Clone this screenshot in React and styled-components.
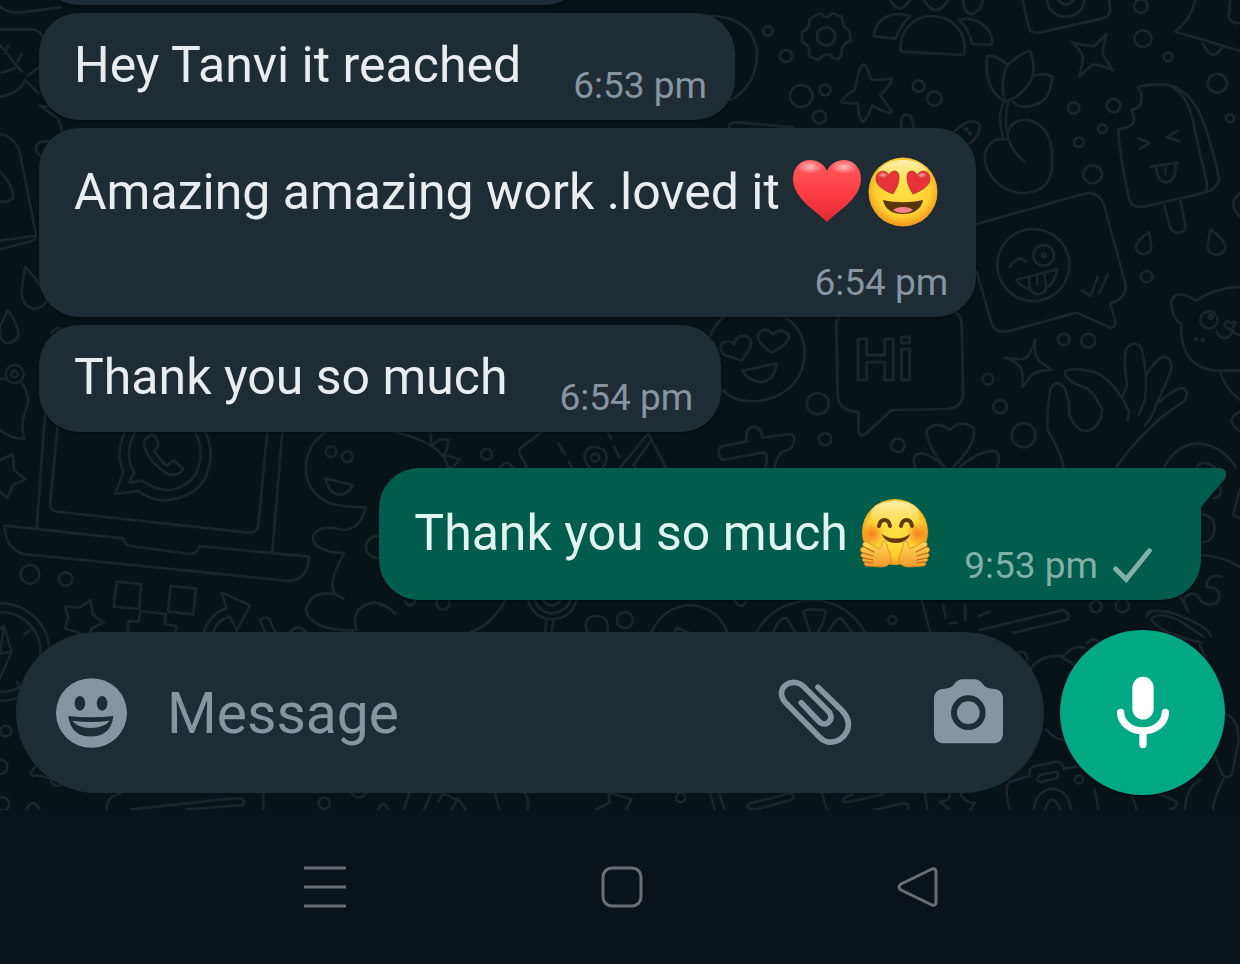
import React from 'react'
import styled, { createGlobalStyle } from 'styled-components'

const GlobalStyle = createGlobalStyle`
  * {
    box-sizing: border-box;
  }
  body {
    margin: 0;
    background: #0b131a;
    font-family: Roboto, 'Noto Sans', sans-serif;
  }
`

const Screen = styled.div`
  display: flex;
  flex-direction: column;
  height: 100vh;
`
const Chat = styled.main`
  position: relative;
  display: flex;
  flex: 1;
  flex-direction: column;
  min-height: 0;
  overflow: hidden;
  background: #081318;
`
const Wallpaper = styled.svg`
  position: absolute;
  inset: 0;
  width: 100%;
  height: 100%;
  fill: none;
  stroke: #1a2429;
  stroke-width: 8;
  stroke-linecap: round;
  stroke-linejoin: round;
`
const WallpaperText = styled.text`
  font: 700 60px 'Liberation Sans', sans-serif;
  stroke-width: 3px;
`
const Messages = styled.section`
  position: relative;
  display: flex;
  flex: 1;
  flex-direction: column;
  justify-content: flex-end;
  gap: 8px;
  min-height: 0;
  padding: 0 39px 30px;
`
const Bubble = styled.article`
  position: relative;
  display: flex;
  flex-shrink: 0;
  flex-direction: ${p => (p.$stacked ? 'column' : 'row')};
  align-items: flex-end;
  align-self: ${p => (p.$sent ? 'flex-end' : 'flex-start')};
  column-gap: ${p => (p.$sent ? 28 : 52)}px;
  row-gap: 34px;
  margin-top: ${p => (p.$sent ? 28 : 0)}px;
  padding: ${p => (p.$sent ? 30 : p.$stacked ? 29 : 23)}px ${p => (p.$sent ? 49 : 28)}px 12px 35px;
  border-radius: ${p => (p.$sent ? '40px 0 40px 40px' : '40px')};
  background: ${p => (p.$sent ? '#005d4b' : '#1f2c34')};
  color: ${p => (p.$sent ? '#e2f3f0' : '#e9edef')};
  box-shadow: 0 2px 2px rgba(0, 0, 0, 0.3);
`
const EarlierBubble = styled(Bubble)`
  width: 47%;
  height: 107px;
`
const Text = styled.p`
  margin: 0 ${p => (p.$inset ? 4 : 0)}px ${p => p.$drop || 0}px 0;
  font-size: 50px;
  line-height: 58px;
  white-space: nowrap;
`
const Meta = styled.footer`
  display: flex;
  align-items: center;
  gap: 15px;
  color: ${p => (p.$sent ? '#80b0a6' : '#8696a0')};
  font-size: 37px;
  line-height: 44px;
  white-space: nowrap;
`
const Tail = styled.svg`
  position: absolute;
  top: 0;
  left: 100%;
  width: 25px;
  height: 39px;
  fill: #005d4b;
`
const EmojiSvg = styled.svg`
  width: 70px;
  height: 70px;
  margin-right: 6px;
  vertical-align: -18px;
`
const Icon = styled.svg`
  display: block;
  width: ${p => p.$w}px;
  height: ${p => p.$h}px;
`
const Composer = styled.form`
  position: relative;
  display: flex;
  align-items: center;
  gap: 16px;
  padding: 0 15px 15px 16px;
`
const Field = styled.div`
  display: flex;
  flex: 1;
  align-items: center;
  min-width: 0;
  height: 161px;
  padding: 0 41px 0 40px;
  border-radius: 81px;
  background: #1f2c34;
  color: #8696a0;
`
const IconButton = styled.button`
  flex-shrink: 0;
  margin: 0 0 0 ${p => p.$gap || 0}px;
  padding: 0;
  border: 0;
  background: none;
  color: inherit;
`
const MessageInput = styled.input`
  flex: 1;
  min-width: 0;
  margin-left: 40px;
  padding: 2px 0 0;
  border: 0;
  outline: 0;
  background: none;
  color: #e9edef;
  font: 400 57px Roboto, sans-serif;
  &::placeholder {
    color: #8696a0;
    opacity: 1;
  }
`
const MicButton = styled.button`
  display: flex;
  flex-shrink: 0;
  align-items: center;
  justify-content: center;
  width: 165px;
  height: 165px;
  padding: 0;
  border: 0;
  border-radius: 50%;
  background: #00a884;
  color: #fff;
  box-shadow: 0 2px 4px rgba(0, 0, 0, 0.4);
`
const SystemNav = styled.nav`
  display: flex;
  align-items: center;
  justify-content: space-around;
  height: 154px;
  padding: 0 14% 0 14.3%;
  color: #6a6f73;
`

const HEART = 'M35 65C27 56 1 42 1 22C1 10 9 3 18 3C26 3 32 7 35 14C38 7 44 3 52 3C61 3 69 10 69 22C69 42 43 56 35 65Z'

const Heart = () => (
  <EmojiSvg viewBox="0 0 70 70" role="img" aria-label="red heart">
    <defs>
      <linearGradient id="heart" x1="0" y1="0" x2="0" y2="1">
        <stop offset="0" stopColor="#ff5a5f" />
        <stop offset="0.55" stopColor="#fb3c42" />
        <stop offset="1" stopColor="#e02a33" />
      </linearGradient>
      <radialGradient id="shine">
        <stop offset="0" stopColor="#fff" stopOpacity="0.6" />
        <stop offset="1" stopColor="#fff" stopOpacity="0" />
      </radialGradient>
    </defs>
    <path d={HEART} fill="url(#heart)" />
    <ellipse cx="18" cy="10" rx="13" ry="7" fill="url(#shine)" />
    <ellipse cx="52" cy="10" rx="13" ry="7" fill="url(#shine)" />
  </EmojiSvg>
)

const HeartEyes = () => (
  <EmojiSvg viewBox="0 0 70 70" role="img" aria-label="smiling face with heart eyes">
    <defs>
      <radialGradient id="face" cx="0.5" cy="0.45" r="0.56">
        <stop offset="0" stopColor="#ffe248" />
        <stop offset="0.72" stopColor="#fdcf2f" />
        <stop offset="1" stopColor="#ee931b" />
      </radialGradient>
      <linearGradient id="faceShine" x1="0" y1="0" x2="0" y2="1">
        <stop offset="0" stopColor="#fff6c4" stopOpacity="0.85" />
        <stop offset="1" stopColor="#fff3a0" stopOpacity="0" />
      </linearGradient>
    </defs>
    <circle cx="35" cy="35" r="34.5" fill="url(#face)" />
    <ellipse cx="35" cy="17" rx="25" ry="14" fill="url(#faceShine)" />
    <path d="M25 37C20 35 8 30 8 22C8 13 18 12 21 18C24 12 31 13 31 20C31 27 28 32 25 37Z" fill="#e8333c" stroke="#a8321f" strokeWidth="0.8" />
    <path d="M45 37C50 35 62 30 62 22C62 13 52 12 49 18C46 12 39 13 39 20C39 27 42 32 45 37Z" fill="#e8333c" stroke="#a8321f" strokeWidth="0.8" />
    <ellipse cx="15" cy="18" rx="5" ry="3" fill="url(#shine)" />
    <ellipse cx="54" cy="18" rx="5" ry="3" fill="url(#shine)" />
    <path d="M15 43C28 46 42 46 55 43C53 53 45 57 35 57C25 57 17 53 15 43Z" fill="#5b3506" />
    <path d="M25 53C29 49 41 49 45 53C40 57 30 57 25 53Z" fill="#f7828c" />
  </EmojiSvg>
)

const Hugging = () => (
  <EmojiSvg viewBox="0 0 70 70" role="img" aria-label="hugging face">
    <defs>
      <radialGradient id="blush">
        <stop offset="0" stopColor="#f76a1c" stopOpacity="0.8" />
        <stop offset="1" stopColor="#f76a1c" stopOpacity="0" />
      </radialGradient>
      <linearGradient id="hand" x1="0" y1="0" x2="0" y2="1">
        <stop offset="0" stopColor="#ffdc58" />
        <stop offset="1" stopColor="#f3992c" />
      </linearGradient>
      <g id="hug-hand">
        <path
          d="M22 44C24 42 27 44 27 48C28 53 31 56 31 61C31 66 27 69 21 69L7 68C4 68 3 65 6 64C2 64 1 61 4 60C0 59 0 56 3 55C-1 53 0 49 4 49C1 46 4 43 7 44L18 50C21 51 22 49 22 44Z"
          fill="url(#hand)"
          stroke="#e2801c"
          strokeWidth="0.8"
        />
        <path d="M4 49L14 54M3 55L13 58M4 60L13 62M6 64L13 65" fill="none" stroke="#bd6410" strokeWidth="1.2" strokeLinecap="round" />
      </g>
    </defs>
    <circle cx="35" cy="34" r="33" fill="url(#face)" />
    <ellipse cx="35" cy="16" rx="24" ry="13" fill="url(#faceShine)" />
    <circle cx="12" cy="36" r="12" fill="url(#blush)" />
    <circle cx="58" cy="36" r="12" fill="url(#blush)" />
    <path d="M19 28C20 20 29 20 30 28M41 28C42 20 51 20 52 28" fill="none" stroke="#5f3a0a" strokeWidth="4" strokeLinecap="round" />
    <path d="M22 36C30 42 42 42 50 36C47 48 25 48 22 36Z" fill="#653807" />
    <use href="#hug-hand" />
    <use href="#hug-hand" transform="translate(70 0) scale(-1 1)" />
  </EmojiSvg>
)

const Rings = ({ items }) => items.map(([cx, cy, r]) => <circle key={`${cx}-${cy}-${r}`} cx={cx} cy={cy} r={r} />)

const Doodles = () => (
  <Wallpaper viewBox="0 0 1240 810" preserveAspectRatio="xMidYMin slice" aria-hidden="true">
    {/* gear, people, star, plant, ice lolly */}
    <g transform="translate(700 0) scale(.3444 .3333)">
      <path d="M0 48C120 40 165 100 165 165C165 235 130 275 90 300" />
      <path d="M341 42L350 40Q366 62 383 40L412 50Q412 80 434 92L437 124Q410 128 410 166L402 178Q385 176 380 165Q366 160 355 168L345 180L316 168Q322 136 296 126V96Q322 84 318 58Z" />
      <path d="M582 150C578 90 625 48 672 48C735 48 775 100 768 158Q768 166 758 165L590 155Q582 155 582 150ZM505 108C508 60 550 30 610 48Q580 80 568 116L512 110ZM752 60C800 45 850 85 848 128Q848 134 840 134L790 132Q780 85 752 60Z" />
      <path d="M552 0Q578 50 610 0M650 0Q685 60 720 0M764 0Q765 40 790 42Q815 35 822 0" />
      <path d="M936 0L956 85Q960 100 985 98L1170 55Q1195 45 1190 20L1188 0M1008 0a54 50 0 0 0 108 0M1040 0q22 28 44 0" />
      <path d="M1438 0Q1425 60 1380 95L1568 152M1460 130Q1485 190 1515 145M1540 0L1535 50Q1545 75 1568 68" />
      <path d="M475 192Q482 195 498 240L555 236Q565 242 523 286Q560 335 555 338Q545 342 500 317Q480 366 473 366Q462 360 458 310L412 308Q405 300 450 268Q462 195 475 192Z" />
      <path d="M1180 102Q1168 150 1170 165L1198 210Q1160 193 1140 194Q1125 205 1102 230Q1112 185 1112 170Q1105 150 1080 127Q1130 140 1145 138Z" />
      <path d="M835 168Q860 165 893 195Q930 160 958 152Q975 190 965 235Q935 290 885 305Q830 270 832 190ZM893 195Q870 240 885 305M965 230Q1000 215 1023 230Q1020 320 940 320Q920 318 908 305" />
      <path d="M882 305Q862 350 880 412M895 302Q880 380 900 430Q915 465 942 484M895 400Q900 360 950 360Q1010 370 1022 450V510Q1010 580 930 580Q850 565 828 490Q820 440 860 418L890 418" />
      <path d="M1270 262Q1300 250 1360 254C1420 280 1430 350 1445 430L1472 550Q1475 572 1460 580L1290 620Q1255 625 1247 600Q1220 480 1214 388Q1250 385 1260 365Q1262 345 1252 330Q1285 325 1282 290Q1280 270 1270 262ZM1360 256C1440 270 1470 380 1490 460Q1505 520 1507 540Q1500 570 1460 580" />
      <path d="M1272 415L1306 429L1278 446M1384 393L1356 412L1392 424M1308 500Q1350 495 1386 488M1325 500Q1325 545 1355 548Q1385 540 1380 492M1352 505v18M1348 615L1366 685Q1385 710 1408 690Q1412 680 1395 605" />
      <path d="M85 384Q85 365 110 367L270 382M585 384Q580 345 600 343Q618 345 620 384M738 395Q790 345 812 375Q815 400 785 430" />
      <Rings
        items={[
          [197, 93, 14], [250, 168, 18], [294, 288, 33], [363, 270, 16], [347, 351, 19], [635, 258, 17],
          [680, 296, 21], [1280, 18, 20], [1286, 116, 25], [1359, 171, 13], [1502, 250, 28], [1085, 324, 17],
          [1201, 317, 20], [1168, 386, 13], [1100, 427, 14], [1140, 523, 27], [1539, 355, 12], [366, 109, 27],
          [773, 388, 3], [784, 400, 3],
        ]}
      />
    </g>
    {/* winking bubble, cat, ok hand */}
    <g transform="translate(960 170) scale(.3333)">
      <path d="M50 162L370 72Q415 60 432 105L495 335Q505 385 450 400L466 455Q468 475 450 473L350 428L145 484Q105 490 95 460L50 305" />
      <path d="M150 290Q175 252 198 275M168 330L292 298Q280 350 258 352M208 358Q185 352 168 330M208 322v25q5 28 30 25q25-5 20-30l-5-30M232 318v25M366 361L392 378L413 320M418 370L443 314" />
      <path d="M567 186Q525 215 528 235Q535 255 555 252Q578 248 573 220ZM752 178Q795 210 797 232Q790 255 768 254Q742 250 743 225Z" />
      <path d="M840 350Q760 355 708 392Q640 350 633 400Q640 450 663 462Q660 600 780 602H840M770 485Q780 505 795 505Q815 500 818 480Q825 495 840 495M812 480Q785 465 800 455Q808 450 812 460Q825 450 826 462ZM780 602Q790 650 840 690M840 725Q790 750 840 785M840 70Q800 100 840 140" />
      <path d="M226 508Q220 560 240 575L276 600Q230 600 212 618L187 652Q190 605 183 595Q165 570 134 563Q185 572 200 562Q215 545 226 508Z" />
      <path d="M310 890Q305 850 262 780Q260 720 272 655Q290 625 315 655Q328 690 328 735Q350 785 380 783Q420 775 427 720Q400 665 380 655Q310 630 315 605Q335 590 400 605Q460 625 508 725L503 750M487 680L502 645Q490 590 497 540Q520 505 545 535Q565 620 555 690L537 733M560 615Q590 560 615 560Q640 570 633 600Q615 650 590 700Q580 740 555 765M600 695Q650 650 670 655Q690 665 672 695Q600 740 570 775Q520 820 470 890" />
      <path d="M612 892Q650 820 720 820Q790 830 828 892M710 892Q725 865 765 892" />
      <Rings
        items={[
          [220, 285, 108], [251, 256, 31], [251, 256, 6], [560, 320, 17], [311, 508, 17], [385, 512, 21],
          [84, 628, 16], [120, 710, 20], [191, 796, 36], [747, 450, 26], [752, 440, 6], [708, 507, 3], [728, 510, 3],
        ]}
      />
    </g>
    {/* heart eyes, speech bubble, clover */}
    <g transform="translate(700 300) scale(.3444 .3333)">
      <path d="M30 108Q40 75 70 50M245 50Q304 90 304 160C304 300 130 340 65 270M122 181L70 165Q50 140 68 127Q90 120 98 133Q105 105 132 107Q155 115 145 145ZM208 157Q165 130 168 105Q185 75 212 103Q235 80 258 105Q262 130 208 157ZM124 212L223 190Q215 245 175 246Q140 242 124 212" />
      <path d="M395 75L400 290Q405 335 460 335V395Q465 410 480 403L556 330L720 327Q765 320 764 280L760 80Q760 50 740 35M395 75Q395 60 405 50" />
      <path d="M60 440L135 425Q130 382 158 380Q180 385 180 413L262 402Q285 408 265 445L235 458Q220 480 217 502M60 440Q45 460 65 480L185 457Q200 460 190 502" />
      <path d="M710 502Q655 430 658 390Q690 360 725 390Q760 355 795 385Q805 430 735 502M625 502Q610 460 645 460Q680 470 710 502M755 500Q820 445 860 455Q875 475 862 502" />
      <Rings items={[[342, 311, 32], [363, 418, 18], [575, 436, 20]]} />
    </g>
    <WallpaperText x="854" y="380">Hi</WallpaperText>
    {/* leaf, bag, drops */}
    <g transform="scale(.3333)">
      <path d="M0 20Q20 38 60 38L180 22M0 88H95Q120 90 128 110M0 135L65 215M15 160L25 135M52 185L65 162M5 218L45 205M0 290Q60 280 75 240L115 280M85 225L120 200M120 318L175 355L187 395M120 318L150 320M150 425Q110 420 107 445Q110 465 125 468" />
      <path d="M0 402Q45 410 60 460L107 700Q110 720 90 725L0 748M0 722L100 708M0 515Q45 560 38 595Q25 608 0 605M75 800Q140 870 140 905Q120 930 95 925Q60 910 66 865ZM23 930Q58 980 55 1010Q40 1030 20 1030Q-5 1020 0 980Z" />
      <path d="M0 1135L20 1137M65 1148Q95 1190 78 1230Q60 1270 72 1317Q30 1315 0 1290M155 1000Q160 985 180 985" />
      <Rings items={[[44, 1122, 27], [44, 1122, 10]]} />
    </g>
    {/* laptop, dinosaur, compass */}
    <g transform="translate(0 420) scale(.3333)">
      <path d="M0 120L38 103L42 150L75 178L40 195L22 233L0 215M137 -40L110 322M175 0L150 255Q152 275 180 276L745 338Q772 338 775 315L802 36M847 36L817 395M14 317L370 355Q372 375 392 378L570 402Q595 402 597 378L927 410Q925 480 865 483L70 402Q15 385 14 317Z" />
      <path d="M375 36Q345 100 370 155L345 222L415 213Q450 241 495 241Q630 230 632 100Q630 60 615 36M405 36Q370 100 402 158L388 188L425 182Q470 212 510 210Q600 195 602 100Q600 60 585 36M455 45Q425 55 435 85Q450 130 505 163Q540 170 550 145L520 122L500 137Q475 115 463 92L475 78Q472 45 455 45Z" />
      <path d="M980 36C900 80 890 210 990 250Q1030 262 1097 262Q1080 330 1030 330Q950 310 938 355Q945 395 1032 400Q975 500 1010 525L1030 535M976 175L1058 195Q1045 225 1015 224Q985 218 976 175M1005 522Q930 510 918 570Q930 630 1060 632M1070 630Q1050 560 1120 548Q1160 550 1186 580M1133 347Q1095 355 1098 385Q1105 412 1133 415" />
      <path d="M350 485L423 492L418 567L341 560ZM512 498L588 506L580 583L504 575ZM383 636L385 603L415 605L422 573L497 582L493 612L530 618L528 636M240 640L195 625L205 595L195 560L240 562L272 540L278 583L311 608L275 625L270 640" />
      <path d="M612 636Q630 580 680 565L665 518L750 556L710 632L690 590Q650 600 640 636M780 600Q800 585 810 600L825 636M780 600L795 636M870 636Q895 610 918 636M-15 640L12 617L35 696L0 775M12 617L0 700L35 696M72 645L92 628M50 785L62 805" />
      <Rings items={[[993, 95, 16], [1042, 110, 16], [90, 463, 28], [197, 477, 20], [2, 696, 146], [2, 696, 120]]} />
    </g>
    {/* map, lollipop, orange slice */}
    <g transform="translate(380 420) scale(.3333)">
      <path d="M45 36Q190 70 205 143M150 36L155 75M160 75Q180 50 205 60Q205 90 190 105Q215 110 238 118Q225 140 210 143M360 143Q380 115 398 143M485 36L420 85Q415 100 430 120L440 143M535 70L555 103M567 125L577 143M685 40L693 55M702 80L718 112M630 143Q600 110 625 85Q650 75 672 90Q690 115 668 143M720 143L805 40L858 143M815 60L760 135L768 143" />
      <path d="M75 543Q90 570 105 543M170 543a20 20 0 1 0 38 0M0 555Q30 560 45 582M270 636Q330 620 375 543M445 543Q460 595 515 598Q575 595 588 543M465 543Q480 578 515 580Q560 575 570 543M490 543Q515 570 540 543M500 600L495 636M520 600L515 636M622 636Q605 590 650 588Q690 590 682 636M815 636Q850 560 930 555Q1010 560 1042 636M885 636L888 622L930 640M1065 543q18 30 35 0" />
      <path d="M1130 636Q1180 545 1300 540Q1400 545 1455 636M1290 636L1270 575Q1270 565 1335 570Q1340 590 1315 636M1180 636Q1200 590 1220 595L1245 636M1345 636Q1370 590 1385 595L1415 636" />
      <Rings items={[[320, 103, 16], [645, 113, 12], [735, 600, 24]]} />
    </g>
    {/* calculator, plate */}
    <g transform="translate(840 460) scale(.3333)">
      <path d="M245 423L270 515M310 435L318 475M330 490L350 488M375 480V435M415 468L450 455M420 510L670 450Q695 465 680 480L520 518M1087 162Q1125 170 1124 205Q1120 245 1087 247M1087 285Q1150 290 1200 320M1200 85L1180 165L1200 175M1140 82Q1150 110 1120 115" />
      <path d="M1015 400Q1030 430 1045 455L1030 420Q1060 380 1080 420Q1100 440 1130 430Q1150 400 1125 385L1100 380Q1100 340 1145 350M920 470Q920 440 1000 460Q1110 500 1112 530M935 480Q945 450 1015 480L1090 530M935 480Q960 520 1085 548" />
      <Rings items={[[157, 480, 12], [768, 440, 17], [847, 437, 20]]} />
    </g>
    {/* cloud, camera, carrot */}
    <g transform="translate(740 620) scale(.3333)">
      <path d="M870 150Q900 105 960 108L1005 135M920 330Q940 355 975 362M970 110Q1000 70 1035 85M1040 70Q1060 50 1075 65M830 100Q860 85 862 120M1380 75L1395 110M310 545Q305 530 340 524M310 545Q320 550 430 522M400 570L490 550Q510 550 505 570M555 520L562 568M625 515Q640 540 600 545L630 570M690 570L705 550Q665 545 662 515" />
      <path d="M810 568Q790 500 810 485L870 468Q865 445 880 440L950 425Q965 425 972 447L1010 440M900 465L950 455Q960 465 950 475L900 487Q885 480 900 465M882 568Q890 510 937 506Q985 510 993 568M915 568Q937 510 960 568M1065 510L1075 568M1455 280Q1500 300 1495 370L1475 465Q1460 480 1445 460L1425 410M1175 525L1190 568M1450 478Q1420 540 1420 568M1335 568Q1340 500 1380 480M1235 510L1310 545Q1310 565 1290 568" />
      <Rings items={[[1017, 478, 12]]} />
    </g>
    <g transform="translate(0 620) scale(.3333)">
      <path d="M80 568Q98 530 118 568M115 425L92 460Q90 470 110 466L150 475Q155 500 180 498M320 568Q320 528 360 522M395 568L700 535Q740 532 730 555L560 568M790 520V568M1055 520Q1075 545 1100 520M1135 568Q1150 535 1163 568M1212 568L1228 520" />
      <path d="M1272 570L1300 505L1380 545L1398 570M1315 545L1330 520M1355 570L1375 535M1485 519L1498 570M1575 519Q1590 545 1582 570M1788 570L1830 547L1825 519L1895 537L1878 570M2130 519L2145 570M2158 519L2175 570M2250 550L2370 520Q2390 530 2375 540L2270 567Q2230 570 2250 550M2465 519L2482 570" />
      <Rings items={[[17, 333, 16], [8, 552, 20], [0, 440, 22], [973, 550, 17], [2042, 533, 14]]} />
    </g>
  </Wallpaper>
)

const SmileIcon = () => (
  <Icon $w={71} $h={70} viewBox="168 174 214 210" aria-hidden="true">
    <ellipse cx="275" cy="279" rx="107" ry="105" fill="currentColor" />
    <g fill="#1f2c34">
      <ellipse cx="240" cy="250" rx="16" ry="22" />
      <ellipse cx="307" cy="250" rx="16" ry="22" />
      <path d="M205 288Q273 296 341 288Q333 350 273 350Q213 350 205 288Z" />
    </g>
    <path d="M217 302Q273 310 330 302Q312 324 273 324Q234 324 217 302Z" fill="currentColor" />
  </Icon>
)

const ClipIcon = () => (
  <Icon $w={74} $h={67} viewBox="112 178 222 200" fill="none" stroke="currentColor" strokeWidth="17" strokeLinecap="round" aria-hidden="true">
    <path d="M232 202L304 272C346 318 310 367 270 367Q252 367 237 352L136 250C95 205 157 165 192 203L266 277C280 300 258 322 238 308L182 249" />
  </Icon>
)

const CameraIcon = () => (
  <Icon $w={69} $h={68} viewBox="582 176 207 204" aria-hidden="true">
    <path
      d="M614 205Q632 205 642 192Q653 177 668 177H703Q718 177 729 192Q738 205 757 205Q789 205 789 237V337Q789 369 757 369H614Q582 369 582 337V237Q582 205 614 205Z"
      fill="currentColor"
    />
    <circle cx="685" cy="277" r="43" fill="none" stroke="#1f2c34" strokeWidth="18" />
  </Icon>
)

const MicIcon = () => (
  <Icon $w={52} $h={73} viewBox="1131 170 156 218" fill="none" stroke="currentColor" strokeWidth="22" strokeLinecap="round" aria-hidden="true">
    <rect x="1177" y="172" width="64" height="128" rx="32" fill="currentColor" stroke="none" />
    <path d="M1142 279A67 55 0 0 0 1276 279M1209 334V375" />
  </Icon>
)

const SentIcon = () => (
  <Icon $w={39} $h={36} viewBox="818 258 118 108" fill="none" stroke="currentColor" strokeWidth="15" strokeLinecap="round" role="img" aria-label="Sent">
    <path d="M826 321L858 352L928 266" />
  </Icon>
)

const NavIcon = ({ children }) => (
  <Icon $w={42} $h={42} viewBox="0 0 42 42" fill="none" stroke="currentColor" strokeWidth="3" strokeLinejoin="round" aria-hidden="true">
    {children}
  </Icon>
)

const App = () => (
  <Screen>
    <GlobalStyle />
    <Chat>
      <Doodles />
      <Messages aria-label="Messages">
        <EarlierBubble />
        <Bubble>
          <Text $drop={14}>Hey Tanvi it reached</Text>
          <Meta>6:53 pm</Meta>
        </Bubble>
        <Bubble $stacked>
          <Text $inset>
            Amazing amazing work .loved it <Heart />
            <HeartEyes />
          </Text>
          <Meta>6:54 pm</Meta>
        </Bubble>
        <Bubble>
          <Text $drop={14}>Thank you so much</Text>
          <Meta>6:54 pm</Meta>
        </Bubble>
        <Bubble $sent>
          <Text $drop={20}>
            Thank you so much <Hugging />
          </Text>
          <Meta $sent>
            9:53 pm <SentIcon />
          </Meta>
          <Tail viewBox="0 0 25 39" aria-hidden="true">
            <path d="M0 0H18C25 0 27 7 23 12L0 39Z" />
          </Tail>
        </Bubble>
      </Messages>
      <Composer onSubmit={e => e.preventDefault()}>
        <Field>
          <IconButton type="button" aria-label="Emoji">
            <SmileIcon />
          </IconButton>
          <MessageInput type="text" placeholder="Message" aria-label="Message" />
          <IconButton type="button" aria-label="Attach">
            <ClipIcon />
          </IconButton>
          <IconButton type="button" aria-label="Camera" $gap={82}>
            <CameraIcon />
          </IconButton>
        </Field>
        <MicButton type="button" aria-label="Record voice message">
          <MicIcon />
        </MicButton>
      </Composer>
    </Chat>
    <SystemNav aria-label="System">
      <IconButton type="button" aria-label="Recent apps">
        <NavIcon>
          <path d="M0 2H42M0 21H42M0 40H42" />
        </NavIcon>
      </IconButton>
      <IconButton type="button" aria-label="Home">
        <NavIcon>
          <rect x="2" y="2" width="38" height="38" rx="9" />
        </NavIcon>
      </IconButton>
      <IconButton type="button" aria-label="Back">
        <NavIcon>
          <path d="M35 3L4 18Q0 21 4 24L35 39Q39 40 39 36V6Q39 2 35 3Z" />
        </NavIcon>
      </IconButton>
    </SystemNav>
  </Screen>
)

export default App
